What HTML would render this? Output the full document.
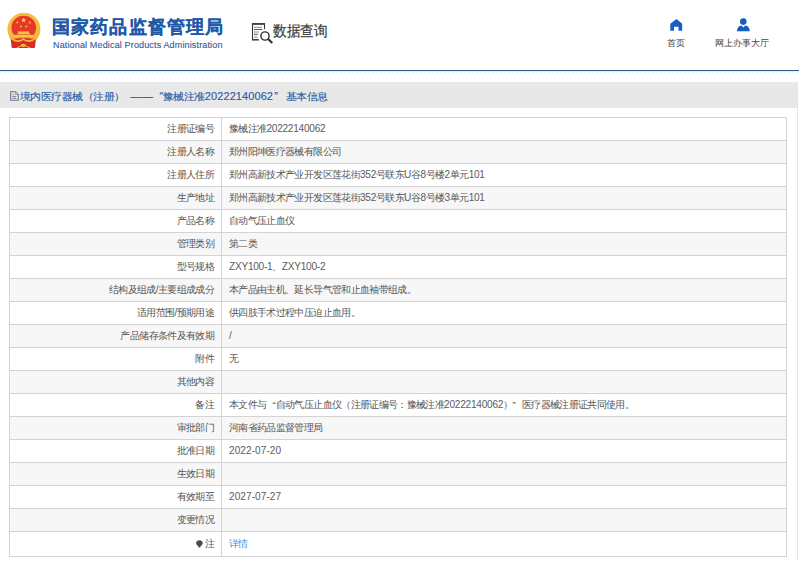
<!DOCTYPE html>
<html><head><meta charset="utf-8">
<style>
*{box-sizing:border-box}
html,body{margin:0;padding:0;background:#fff;width:799px;height:561px;overflow:hidden;font-family:"Liberation Sans",sans-serif}
.abs{position:absolute}
#emblem{left:5px;top:10px;width:38px;height:40px}
#t1{left:52px;top:16px;font-size:17.5px;font-weight:900;color:#2159a8;-webkit-text-stroke:0.2px #2159a8;white-space:nowrap;line-height:22px;letter-spacing:1.15px}
#t2{left:53px;top:39px;font-size:9px;color:#35599b;-webkit-text-stroke:0.12px #35599b;white-space:nowrap;line-height:12px;letter-spacing:0.15px}
#sq{left:251px;top:22px;width:23px;height:22px}
#sqt{left:273px;top:22px;font-size:14px;color:#3c3c3c;line-height:16px;white-space:nowrap;letter-spacing:-0.4px;transform:scaleY(1.1);transform-origin:0 0;-webkit-text-stroke:0.2px #3c3c3c}
.nav{font-size:9.3px;color:#444;white-space:nowrap;line-height:12px}
#bl{left:0;top:69.5px;width:799px;height:1.6px;background:#2a5889}
#dots{left:0;top:72px;width:799px;height:1px;background:repeating-linear-gradient(90deg,#eaf0f7 0 2px,transparent 2px 4px)}
#bl2{left:0;top:71.1px;width:799px;height:0.9px;background:#e6f3f8}
#bar{left:0;top:81.8px;width:797px;height:26.6px;background:#e8e8e8}
#vline{left:797px;top:82px;width:1px;height:479px;background:#e6e6e6}
#ttl{left:19.5px;top:88.5px;font-size:11px;letter-spacing:-0.5px;color:#2a5ca6;transform:scaleY(0.92);transform-origin:0 7px;-webkit-text-stroke:0.15px #2a5ca6;white-space:nowrap;line-height:14px}
#doc{left:10px;top:91px;width:9px;height:10px}
table{position:absolute;left:9px;top:116.8px;width:778px;border-collapse:collapse;font-size:10px;color:#555;letter-spacing:-0.65px}
td{text-spacing-trim:space-all;border:1px solid #d3d3d3;height:23px;padding:0;line-height:12px;white-space:nowrap}
td.l{width:212px;text-align:right;padding-right:7px}
td.v{padding-left:7px}
tr:nth-child(even) td{background:#f7f7f7}
tr.last td{height:24.8px}
a{color:#3d8be4;text-decoration:none}
i{font-style:normal}
b.ql,b.qr{font-weight:normal;display:inline-block;width:9.4px;font-size:9.8px;letter-spacing:0}
b.ql{text-align:right}
b.qr{text-align:left}
#ttl i{font-size:11px}
table i{font-size:10.1px;letter-spacing:-0.25px;color:#5c5c5c}
table i.d{letter-spacing:0.05px}
</style></head><body>
<svg id="emblem" class="abs" viewBox="0 0 38 40">
  <circle cx="18.95" cy="19.15" r="16.45" fill="#f2bd3c"/>
  <path d="M5.6 28.4L30.9 28.4L30 37.2Q29.8 37.9 29 37.9L7.5 37.9Q6.7 37.9 6.6 37.2Z" fill="#d92b26"/>
  <ellipse cx="18.75" cy="17.65" rx="12.35" ry="11.9" fill="#e8362b"/>
  <path d="M4.8 26.6Q8.5 30.6 12 31Q15.5 31.4 18.3 29.2Q21 31.4 24.6 31Q28.3 30.6 32.6 26.6" fill="none" stroke="#f2bd3c" stroke-width="1.7"/>
  <rect x="13.2" y="21.4" width="10.8" height="2.6" fill="#f4c447"/>
  <rect x="12" y="23.3" width="13.2" height="1" fill="#f4c447"/>
  <rect x="8.9" y="24.8" width="19.1" height="2.9" fill="#f4c447"/>
  <ellipse cx="18.3" cy="35.3" rx="2.6" ry="1.6" fill="#f2bd3c"/>
  <path d="M16 35.8L11.8 37.9M20.6 35.8L25.3 37.9" stroke="#f2bd3c" stroke-width="1"/>
  <path d="M18.6 7.6l0.75 1.6 1.75 0.2-1.3 1.2 0.35 1.75-1.55-0.9-1.55 0.9 0.35-1.75-1.3-1.2 1.75-0.2z" fill="#f7d24a"/>
  <circle cx="12.3" cy="12.5" r="0.9" fill="#f7d24a"/>
  <circle cx="24.9" cy="12.5" r="0.9" fill="#f7d24a"/>
  <circle cx="15.8" cy="16.4" r="0.9" fill="#f7d24a"/>
  <circle cx="21.3" cy="16.4" r="0.9" fill="#f7d24a"/>
</svg>
<div id="t1" class="abs">国家药品监督管理局</div>
<div id="t2" class="abs">National Medical Products Administration</div>
<svg id="sq" class="abs" viewBox="0 0 23 22">
  <path d="M1.5 18.2V1.9H13.5V7.2" fill="none" stroke="#3a3a3a" stroke-width="1.1"/>
  <path d="M1 1.9H14" stroke="#3a3a3a" stroke-width="1.6"/>
  <path d="M1 17.8H7.8" stroke="#3a3a3a" stroke-width="1.5"/>
  <path d="M3 5.3h8M3 10h5M3 15h3.5" stroke="#8a8a8a" stroke-width="1"/>
  <path d="M3 7.5h8.5M3 12.3h4" stroke="#444" stroke-width="0.9"/>
  <circle cx="14" cy="14" r="4.1" fill="none" stroke="#2e2e2e" stroke-width="1.4"/>
  <path d="M17.1 17.1L21.3 21.1" stroke="#2e2e2e" stroke-width="2.1"/>
</svg>
<div id="sqt" class="abs">数据查询</div>

<svg class="abs" style="left:669px;top:18px" width="15" height="14" viewBox="0 0 15 14">
  <path d="M1.3 5.8L7.5 1.1L13.2 5.8V12.7H9.5V8.7H5V12.7H1.3Z" fill="#1a5fc0"/>
</svg>
<div class="abs nav" style="left:667px;top:37px">首页</div>
<svg class="abs" style="left:736px;top:17px" width="15" height="16" viewBox="0 0 15 16">
  <circle cx="7.3" cy="4.6" r="3.3" fill="#135cc0"/>
  <path d="M1 14.3C1 11 3 8.6 5.5 8.4L7.3 10.5L9.2 8.4C11.8 8.6 13.8 11 13.8 14.3Z" fill="#135cc0"/>
</svg>
<div class="abs nav" style="left:715px;top:37px">网上办事大厅</div>

<div id="bl" class="abs"></div>
<div id="bl2" class="abs"></div><div id="dots" class="abs"></div>
<div id="bar" class="abs"></div>
<div id="vline" class="abs"></div>
<svg id="doc" class="abs" viewBox="0 0 9 10">
  <path d="M0.7 0.7H5.6L8.3 3.4V9.3H0.7Z" fill="none" stroke="#6a768d" stroke-width="1.1"/>
  <path d="M5.6 0.7V3.4H8.3" fill="#c8d0e0" stroke="#6a768d" stroke-width="0.6"/>
  <path d="M2.6 3.6h1.3M2.5 5.4h3.8M2.5 7.3h3.8" stroke="#6a768d" stroke-width="0.9"/>
</svg>
<div id="ttl" class="abs">境内医疗器械（注册）<i style="margin-left:6px;font-size:11px;letter-spacing:0.5px">——</i><i style="margin-left:6px;letter-spacing:-0.5px">“</i>豫械注准<i style="margin-left:0.2px;letter-spacing:0.08px">20222140062</i><i style="margin-left:1.3px">”</i><span style="margin-left:8px">基本信息</span></div>

<table>
<tr><td class="l">注册证编号</td><td class="v">豫械注准<i>20222140062</i></td></tr>
<tr><td class="l">注册人名称</td><td class="v">郑州阳坤医疗器械有限公司</td></tr>
<tr><td class="l">注册人住所</td><td class="v">郑州高新技术产业开发区莲花街<i>352</i>号联东<i>U</i>谷<i>8</i>号楼<i>2</i>单元<i>101</i></td></tr>
<tr><td class="l">生产地址</td><td class="v">郑州高新技术产业开发区莲花街<i>352</i>号联东<i>U</i>谷<i>8</i>号楼<i>3</i>单元<i>101</i></td></tr>
<tr><td class="l">产品名称</td><td class="v">自动气压止血仪</td></tr>
<tr><td class="l">管理类别</td><td class="v">第二类</td></tr>
<tr><td class="l">型号规格</td><td class="v"><i>ZXY100-1</i>、<i>ZXY100-2</i></td></tr>
<tr><td class="l">结构及组成/主要组成成分</td><td class="v">本产品由主机、延长导气管和止血袖带组成。</td></tr>
<tr><td class="l">适用范围/预期用途</td><td class="v">供四肢手术过程中压迫止血用。</td></tr>
<tr><td class="l">产品储存条件及有效期</td><td class="v"><i>/</i></td></tr>
<tr><td class="l">附件</td><td class="v">无</td></tr>
<tr><td class="l">其他内容</td><td class="v"></td></tr>
<tr><td class="l">备注</td><td class="v">本文件与<b class="ql">“</b>自动气压止血仪（注册证编号：豫械注准<i>20222140062</i>）<b class="qr">”</b>医疗器械注册证共同使用。</td></tr>
<tr><td class="l">审批部门</td><td class="v">河南省药品监督管理局</td></tr>
<tr><td class="l">批准日期</td><td class="v"><i class="d">2022-07-20</i></td></tr>
<tr><td class="l">生效日期</td><td class="v"></td></tr>
<tr><td class="l">有效期至</td><td class="v"><i class="d">2027-07-27</i></td></tr>
<tr><td class="l">变更情况</td><td class="v"></td></tr>
<tr class="last"><td class="l"><svg width="7" height="8" viewBox="0 0 7 8" style="vertical-align:-1px;margin-right:1.3px"><path d="M3.4 0.2C5.3 0.2 6.7 1.5 6.7 3.2C6.7 4.5 5.8 5.2 4.6 5.9L4.3 7.6H2.5L2.2 5.9C1 5.2 0.1 4.5 0.1 3.2C0.1 1.5 1.5 0.2 3.4 0.2Z" fill="#4a4a4a"/></svg>注</td><td class="v"><a>详情</a></td></tr>
</table>
</body></html>
